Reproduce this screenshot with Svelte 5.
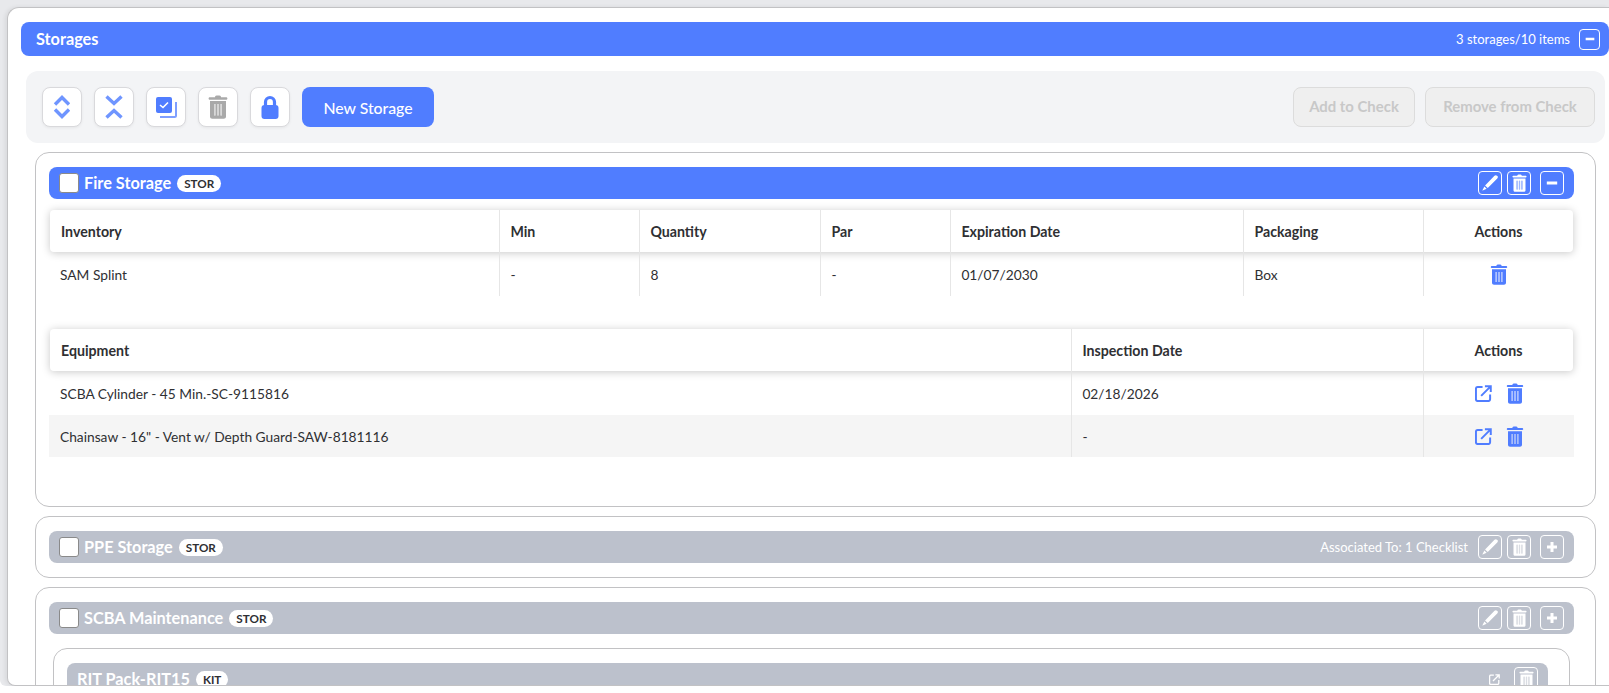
<script>
  const inventoryCols = ['Inventory', 'Min', 'Quantity', 'Par', 'Expiration Date', 'Packaging'];
  const inventoryRows = [['SAM Splint', '-', '8', '-', '01/07/2030', 'Box']];
  const equipmentRows = [
    ['SCBA Cylinder - 45 Min.-SC-9115816', '02/18/2026'],
    ['Chainsaw - 16" - Vent w/ Depth Guard-SAW-8181116', '-']
  ];
</script>

{#snippet trash(cls)}
  <svg class={cls} viewBox="0 0 20 24">
    <path class="fill" d="M7 2.200C7 1 8 .6 10 .6s3 .4 3 1.600h5c.8 0 1.400.5 1.400 1.200S18.800 4.700 18 4.700H2C1.200 4.700.6 4.100.6 3.400S1.200 2.200 2 2.200z" />
    <path class="fill" fill-rule="evenodd" d="M2 6h16v15.500c0 1.300-1 2.300-2.300 2.300H4.300C3 23.800 2 22.800 2 21.500zM6 9v11.500h1.600V9zM9.200 9v11.500h1.600V9zM12.400 9v11.500H14V9z" />
    <path class="bars" d="M6 9v11.500h1.600V9zM9.200 9v11.500h1.600V9zM12.400 9v11.500H14V9z" />
  </svg>
{/snippet}

{#snippet pencil()}
  <svg class="ico-pencil" viewBox="0 0 24 24">
    <path class="fill" d="M18 2.300c1-1 2.400-1 3.300-.1l.6.600c.9.900.8 2.300-.2 3.300L9 18.800 5.400 15.200zM4.500 16.600l3 3-5.200 2.400c-.3.100-.6-.2-.4-.5z" />
  </svg>
{/snippet}

{#snippet external(cls)}
  <svg class={cls} viewBox="0 0 18 18">
    <path class="line" d="M8 2H2.800C1.800 2 1 2.800 1 3.800v11.400c0 1 .8 1.800 1.800 1.800h11.400c1 0 1.800-.8 1.800-1.800V10" />
    <path class="line" d="M6.500 11.500 16 2M10.500 1.300H16.700V7.500" />
  </svg>
{/snippet}

{#snippet minus()}
  <svg class="ico-sign" viewBox="0 0 12 12"><path class="line-bold" d="M.8 6h10.400" /></svg>
{/snippet}

{#snippet plus()}
  <svg class="ico-sign" viewBox="0 0 12 12"><path class="line-bold" d="M1 6h10M6 1v10" /></svg>
{/snippet}

<div class="page">
  <div class="panel">
    <header class="bar bar-main">
      <span class="bar-title">Storages</span>
      <span class="bar-right">
        <span class="count">3 storages/10 items</span>
        <button class="ghost ghost-sm">{@render minus()}</button>
      </span>
    </header>

    <div class="toolbar">
      <div class="tools">
        <button class="tool">
          <svg class="ico-chev" viewBox="0 0 18 24"><path class="line-chev" d="M2 9.500 9 2.500 16 9.500M2 14.500 9 21.500 16 14.500" /></svg>
        </button>
        <button class="tool">
          <svg class="ico-chev" viewBox="0 0 18 24"><path class="line-chev" d="M1.500 1.500 9 8.500 16.500 1.500M1.500 22.500 9 15.500 16.500 22.500" /></svg>
        </button>
        <button class="tool">
          <svg class="ico-check" viewBox="0 0 21 21">
            <rect class="fill" x="0" y="0" width="16" height="16" rx="2" />
            <path class="check" d="M4 8l3 2.500 5-5" />
            <path class="line-thin" d="M20 5V18.500c0 .9-.6 1.500-1.500 1.500H4" />
          </svg>
        </button>
        <button class="tool tool-muted">{@render trash('ico-trash-lg')}</button>
        <button class="tool">
          <svg class="ico-lock" viewBox="0 0 18 24">
            <path class="line-lock" d="M4.500 11V7a4.500 4.500 0 0 1 9 0v4" />
            <rect class="fill" x="0.500" y="10" width="17" height="14" rx="3" />
          </svg>
        </button>
        <button class="primary">New Storage</button>
      </div>
      <div class="tools">
        <button class="disabled btn-add">Add to Check</button>
        <button class="disabled btn-remove">Remove from Check</button>
      </div>
    </div>

    <section class="card card-open">
      <div class="bar bar-storage">
        <span class="bar-left">
          <span class="checkbox"></span>
          <span class="name">Fire Storage</span>
          <span class="tag">STOR</span>
        </span>
        <span class="bar-right">
          <button class="ghost">{@render pencil()}</button>
          <button class="ghost">{@render trash('ico-trash-sm')}</button>
          <button class="ghost ghost-last">{@render minus()}</button>
        </span>
      </div>

      <div class="tbl tbl-inventory">
        <div class="row row-head">
          {#each inventoryCols as col}
            <div class="cell">{col}</div>
          {/each}
          <div class="cell cell-actions">Actions</div>
        </div>
        {#each inventoryRows as row}
          <div class="row">
            {#each row as val}
              <div class="cell">{val}</div>
            {/each}
            <div class="cell cell-actions">{@render trash('ico-trash-row')}</div>
          </div>
        {/each}
      </div>

      <div class="tbl tbl-equipment">
        <div class="row row-head">
          <div class="cell">Equipment</div>
          <div class="cell">Inspection Date</div>
          <div class="cell cell-actions">Actions</div>
        </div>
        {#each equipmentRows as row, i}
          <div class="row" class:striped={i % 2 === 1}>
            <div class="cell">{row[0]}</div>
            <div class="cell">{row[1]}</div>
            <div class="cell cell-actions">
              {@render external('ico-ext')}
              {@render trash('ico-trash-row')}
            </div>
          </div>
        {/each}
      </div>
    </section>

    <section class="card">
      <div class="bar bar-storage bar-off">
        <span class="bar-left">
          <span class="checkbox"></span>
          <span class="name">PPE Storage</span>
          <span class="tag">STOR</span>
        </span>
        <span class="bar-right">
          <span class="assoc">Associated To: 1 Checklist</span>
          <button class="ghost">{@render pencil()}</button>
          <button class="ghost">{@render trash('ico-trash-sm')}</button>
          <button class="ghost ghost-last">{@render plus()}</button>
        </span>
      </div>
    </section>

    <section class="card card-nested">
      <div class="bar bar-storage bar-off">
        <span class="bar-left">
          <span class="checkbox"></span>
          <span class="name">SCBA Maintenance</span>
          <span class="tag">STOR</span>
        </span>
        <span class="bar-right">
          <button class="ghost">{@render pencil()}</button>
          <button class="ghost">{@render trash('ico-trash-sm')}</button>
          <button class="ghost ghost-last">{@render plus()}</button>
        </span>
      </div>
      <div class="kit">
        <div class="bar bar-kit bar-off">
          <span class="bar-left">
            <span class="name">RIT Pack-RIT15</span>
            <span class="tag">KIT</span>
          </span>
          <span class="bar-right">
            {@render external('ico-ext-sm')}
            <button class="ghost ghost-kit">{@render trash('ico-trash-sm')}</button>
          </span>
        </div>
      </div>
    </section>
  </div>
</div>

<style>
  :global(body) {
    margin: 0;
    background: #fff;
    font-family: Lato, 'Open Sans', sans-serif;
    color: #2f3033;
  }

  button {
    font-family: inherit;
    cursor: pointer;
    padding: 0;
  }

  .page {
    height: 686px;
    padding: 7px 0 0 7px;
    box-sizing: border-box;
    background: #e8e9ec;
    border-radius: 0 0 0 6px;
    overflow: hidden;
  }

  .panel {
    height: 679px;
    box-sizing: border-box;
    padding: 14px 0 0 13px;
    background: #fff;
    border: 1px solid #c2c2c4;
    border-right: none;
    border-radius: 12px 0 0 8px;
    box-shadow: -2px 0 4px rgba(0, 0, 0, 0.07);
    overflow: hidden;
  }

  .bar {
    display: flex;
    align-items: center;
    justify-content: space-between;
    color: #fff;
    box-sizing: border-box;
  }

  .bar-main {
    height: 34px;
    padding: 0 9px 0 15px;
    background: #507dff;
    border-radius: 8px;
  }

  .bar-title {
    padding-bottom: 1px;
    font-size: 16.3px;
    font-weight: 700;
  }

  .bar-left,
  .bar-right {
    display: flex;
    align-items: center;
  }

  .count {
    font-size: 13px;
    margin-right: 9px;
  }

  .ghost {
    width: 24px;
    height: 24px;
    box-sizing: border-box;
    display: flex;
    align-items: center;
    justify-content: center;
    margin-left: 5px;
    background: transparent;
    border: 1px solid #fff;
    border-radius: 4px;
  }

  .ghost-sm {
    width: 21px;
    height: 21px;
    margin-left: 0;
  }

  .ghost-sm .ico-sign {
    width: 10px;
    height: 10px;
  }

  .ghost-last {
    margin-left: 9px;
  }

  .ghost-kit {
    margin-left: 14px;
  }

  .toolbar {
    display: flex;
    justify-content: space-between;
    align-items: center;
    height: 72px;
    box-sizing: border-box;
    margin: 15px 4px 0 5px;
    padding: 0 10px 0 16px;
    background: #f3f4f6;
    border-radius: 12px;
  }

  .tools {
    display: flex;
    gap: 12px;
  }

  .tool {
    width: 40px;
    height: 40px;
    display: flex;
    align-items: center;
    justify-content: center;
    background: #fff;
    border: 1px solid #d9d9dc;
    border-radius: 8px;
    box-shadow: 0 1px 3px rgba(0, 0, 0, 0.06);
  }

  .primary {
    width: 132px;
    height: 40px;
    background: #507dff;
    border: none;
    border-radius: 8px;
    color: #fff;
    font-size: 15.8px;
    font-weight: 500;
  }

  .disabled {
    height: 40px;
    padding-bottom: 2px;
    background: #efefef;
    border: 1px solid #dcdcdc;
    border-radius: 8px;
    color: #c8c8c8;
    font-size: 14.9px;
    font-weight: 700;
  }

  .btn-add {
    width: 122px;
    margin-right: -2px;
  }

  .btn-remove {
    width: 170px;
  }

  .card {
    margin: 9px 13px 9px 14px;
    padding: 14px 21px 14px 13px;
    border: 1px solid #c2c2c4;
    border-radius: 14px;
  }

  .card-open {
    height: 355px;
    box-sizing: border-box;
  }

  .card-nested {
    padding-bottom: 60px;
  }

  .bar-storage {
    height: 32px;
    padding: 0 10px;
    background: #507dff;
    border-radius: 8px;
  }

  .bar-off {
    background: #bcc1cc;
  }

  .checkbox {
    width: 20px;
    height: 20px;
    box-sizing: border-box;
    margin-right: 5px;
    background: #fff;
    border: 1px solid #8a8a8a;
    border-radius: 3px;
  }

  .name {
    padding-bottom: 1px;
    font-size: 16.3px;
    font-weight: 700;
  }

  .tag {
    margin-left: 6px;
    padding: 0 7px;
    height: 17px;
    line-height: 17px;
    background: #fff;
    border-radius: 9px;
    color: #2f3033;
    font-size: 11.7px;
    font-weight: 700;
  }

  .assoc {
    font-size: 13px;
    margin-right: 5px;
  }

  .tbl {
    margin-top: 11px;
    font-size: 13.75px;
  }

  .tbl-equipment {
    margin-top: 33px;
  }

  .row {
    display: grid;
    height: 44px;
    align-items: stretch;
  }

  .tbl-inventory .row {
    grid-template-columns: 451px 140px 181px 130px 293px 180px 1fr;
  }

  .tbl-equipment .row {
    grid-template-columns: 1023px 352px 1fr;
  }

  .tbl-equipment .row:last-child {
    height: 42px;
  }

  .row-head {
    height: 42px;
    margin: 0 1px;
    background: #fff;
    border-radius: 4px;
    box-shadow: 0 1px 8px rgba(0, 0, 0, 0.22);
    font-size: 14.2px;
    font-weight: 700;
  }

  .tbl-inventory .row-head {
    grid-template-columns: 450px 140px 181px 130px 293px 180px 1fr;
  }

  .tbl-equipment .row-head {
    grid-template-columns: 1022px 352px 1fr;
  }

  .striped {
    background: #f5f5f5;
  }

  .cell {
    display: flex;
    align-items: center;
    padding: 0 11px;
    border-right: 1px solid #e6e6e6;
  }

  .cell:not(:first-child) {
    padding-left: 10.4px;
  }

  .cell:last-child {
    border-right: none;
  }

  .cell.cell-actions {
    justify-content: center;
    gap: 14px;
    padding: 0;
  }

  .kit {
    margin: 14px 4px 0 4px;
    padding: 14px 21px 14px 13px;
    border: 1px solid #c2c2c4;
    border-radius: 14px;
  }

  .bar-kit {
    height: 32px;
    padding: 0 10px;
    background: #bcc1cc;
    border-radius: 8px;
  }

  .fill {
    fill: currentColor;
  }

  .bars {
    fill: currentColor;
    opacity: 0.45;
  }

  .line,
  .line-bold,
  .line-chev,
  .line-thin,
  .line-lock {
    fill: none;
    stroke: currentColor;
  }

  .line {
    stroke-width: 2.1;
  }

  .line-bold {
    stroke-width: 3;
  }

  .line-chev {
    stroke-width: 3.4;
  }

  .line-thin {
    stroke-width: 2;
    color: #7f9fff;
  }

  .line-lock {
    stroke-width: 3.2;
  }

  .check {
    fill: none;
    stroke: #fff;
    stroke-width: 1.6;
  }

  .tool svg {
    color: #507dff;
  }

  .tool .ico-chev {
    width: 18px;
    height: 24px;
    color: #6f95ff;
  }

  .ico-check {
    width: 21px;
    height: 21px;
  }

  .ico-lock {
    width: 18px;
    height: 24px;
  }

  .tool-muted svg {
    color: #a9a9a9;
  }

  .ico-trash-lg {
    width: 20px;
    height: 24px;
  }

  .ghost svg,
  .bar svg {
    color: #fff;
  }

  .ico-sign {
    width: 12px;
    height: 12px;
  }

  .ico-pencil {
    width: 18px;
    height: 18px;
  }

  .ico-trash-sm {
    width: 15px;
    height: 18px;
  }

  .ico-trash-row {
    width: 18px;
    height: 21px;
    color: #507dff;
  }

  .ico-ext {
    width: 17px;
    height: 17px;
    color: #507dff;
  }

  .ico-ext-sm {
    width: 11px;
    height: 11px;
  }
</style>
